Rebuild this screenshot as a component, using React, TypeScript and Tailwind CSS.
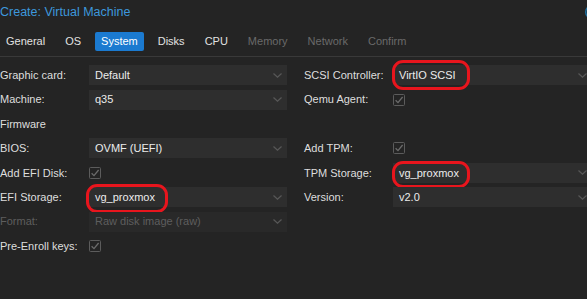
import React from "react";

const TABS = [
	{ name: "General", state: "normal" },
	{ name: "OS", state: "normal" },
	{ name: "System", state: "active" },
	{ name: "Disks", state: "normal" },
	{ name: "CPU", state: "normal" },
	{ name: "Memory", state: "disabled" },
	{ name: "Network", state: "disabled" },
	{ name: "Confirm", state: "disabled" },
];

function Chevron() {
	return (
		<svg width="9" height="5" viewBox="0 0 9 5" className="shrink-0">
			<path d="M0.5 0.5 L4.5 4.2 L8.5 0.5" fill="none" stroke="#585858" strokeWidth="1.2" />
		</svg>
	);
}

function Select({
	value,
	disabled,
	mark,
}: {
	value: string;
	disabled?: boolean;
	mark?: string;
}) {
	return (
		<div
			className={`relative flex h-[20px] items-center pl-[6px] pr-[5px] ${
				disabled ? "bg-[#292929] text-[#5e5e5e]" : "bg-[#2e2e2e] text-[#ececec]"
			}`}
		>
			<span className="flex-1">{value}</span>
			<Chevron />
			{/* red annotation */}
			{mark && <div className={`pointer-events-none absolute rounded-[11px] border-[3px] border-[#e8151d] ${mark}`} />}
		</div>
	);
}

function Check() {
	return (
		<svg width="12" height="12" viewBox="0 0 12 12">
			<rect x="0.5" y="0.5" width="11" height="11" rx="1" fill="none" stroke="#5c5c5c" />
			<path d="M2.6 6.2 L5 8.6 L9.6 3" fill="none" stroke="#6c6c6c" strokeWidth="1.3" />
		</svg>
	);
}

function Row({
	label,
	disabled,
	children,
}: {
	label?: string;
	disabled?: boolean;
	children?: React.ReactNode;
}) {
	return (
		<div className="flex h-[24.4px] items-center">
			<div className={`w-[89px] shrink-0 ${disabled ? "text-[#5e5e5e]" : "text-[#dedede]"}`}>{label}</div>
			<div className="flex-1">{children}</div>
		</div>
	);
}

export default function App() {
	return (
		<div className="h-[299px] w-[587px] overflow-hidden bg-[#242424] font-['Liberation_Sans',Arial,sans-serif] text-[11px]">
			<div className="w-[592px]">
				{/* ================= HEADER ================= */}
				<div className="flex h-[24px] items-start pt-[3px]">
					<p className="text-[12.5px] leading-[18px] text-[#3d98dc]">Create: Virtual Machine</p>
					<svg width="16" height="16" viewBox="0 0 16 16" className="ml-auto mr-[-8px] mt-[1px]">
						<circle cx="8" cy="8" r="6.3" fill="none" stroke="#1f6f9e" strokeWidth="1.6" />
						<path d="M5.5 5.5 L10.5 10.5 M10.5 5.5 L5.5 10.5" stroke="#1f6f9e" strokeWidth="1.4" />
					</svg>
				</div>

				{/* ================= TABS ================= */}
				<div className="mt-[8px] flex h-[19px] items-stretch gap-[8px]">
					{TABS.map((t) => (
						<div
							key={t.name}
							className={`flex items-center px-[6px] ${
								t.state === "active"
									? "rounded-[2px] bg-[#1b7ad0] text-white"
									: t.state === "disabled"
										? "text-[#6a6a6a]"
										: "text-[#e2e2e2]"
							}`}
						>
							{t.name}
						</div>
					))}
				</div>
				<div className="mt-[5px] h-px bg-[#393939]" />

				{/* ================= FORM ================= */}
				<div className="flex gap-[17px] pt-[6px]">
					<div className="flex w-[287px] flex-col">
						<Row label="Graphic card:">
							<Select value="Default" />
						</Row>
						<Row label="Machine:">
							<Select value="q35" />
						</Row>
						<Row label="Firmware" />
						<Row label="BIOS:">
							<Select value="OVMF (UEFI)" />
						</Row>
						<Row label="Add EFI Disk:">
							<Check />
						</Row>
						<Row label="EFI Storage:">
							<Select value="vg_proxmox" mark="left-[-3px] top-[-3px] h-[29px] w-[82px]" />
						</Row>
						<Row label="Format:" disabled>
							<Select value="Raw disk image (raw)" disabled />
						</Row>
						<Row label="Pre-Enroll keys:">
							<Check />
						</Row>
					</div>

					<div className="flex w-[288px] flex-col">
						<Row label="SCSI Controller:">
							<Select value="VirtIO SCSI" mark="left-[-1px] top-[-5px] h-[30px] w-[78px]" />
						</Row>
						<Row label="Qemu Agent:">
							<Check />
						</Row>
						<Row />
						<Row label="Add TPM:">
							<Check />
						</Row>
						<Row label="TPM Storage:">
							<Select value="vg_proxmox" mark="left-[-1px] top-[-2px] h-[27px] w-[78px]" />
						</Row>
						<Row label="Version:">
							<Select value="v2.0" />
						</Row>
					</div>
				</div>
			</div>
		</div>
	);
}
